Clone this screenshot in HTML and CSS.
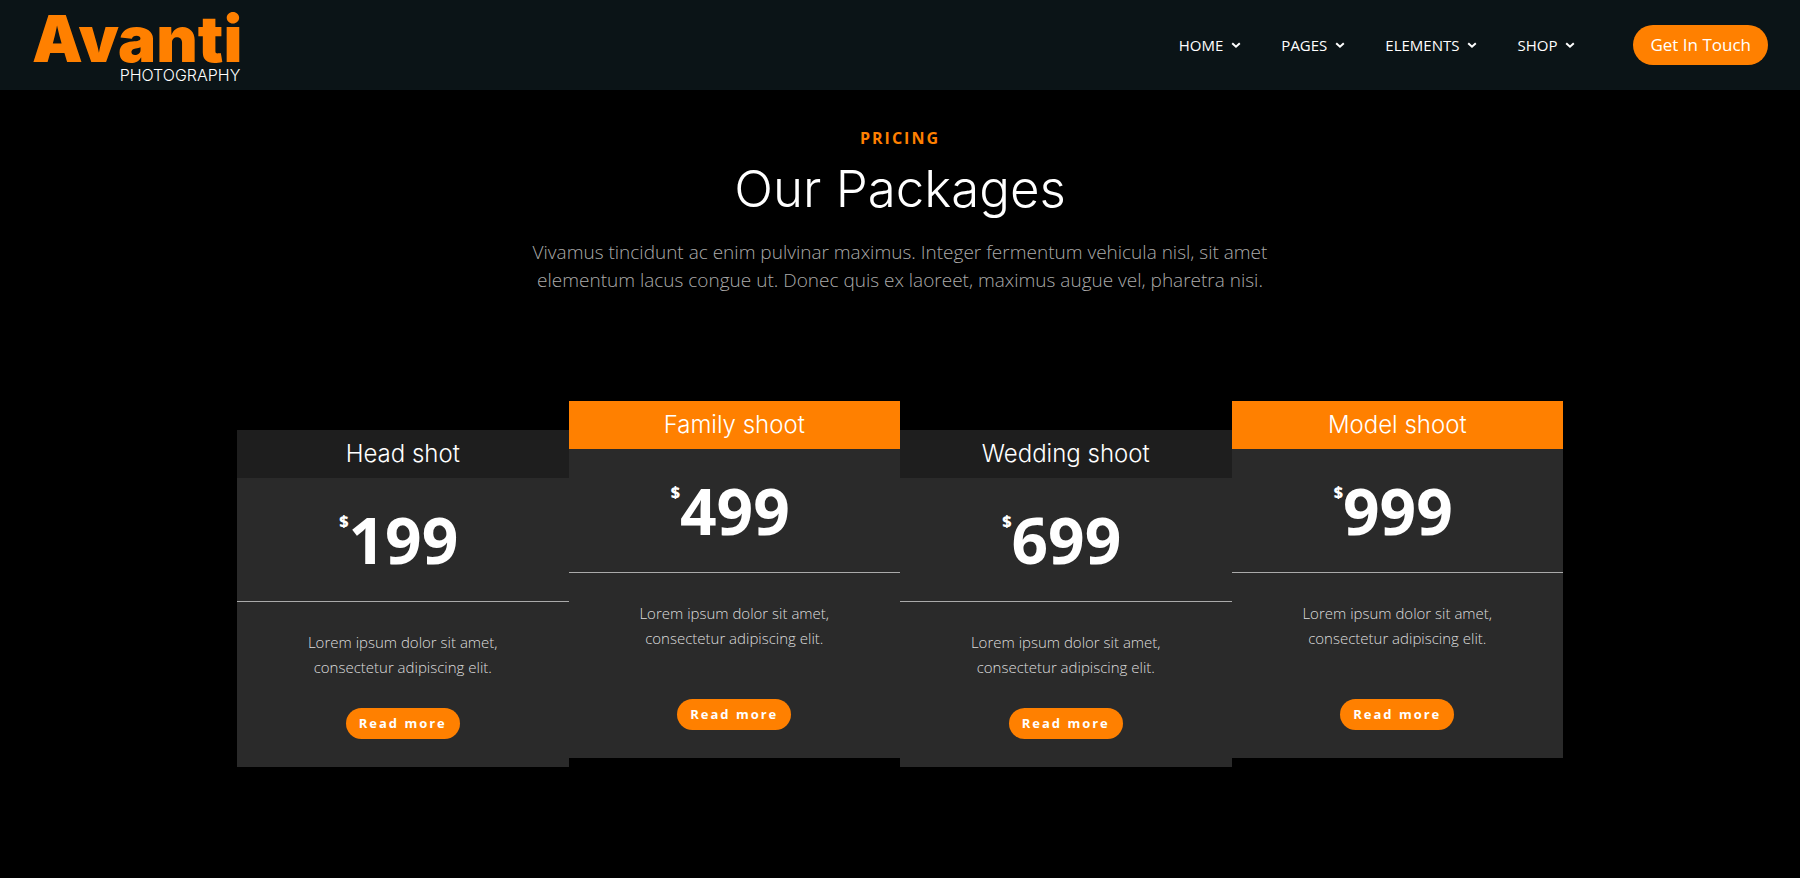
FILE: index.html
```html
<!DOCTYPE html>
<html lang="en">
<head>
<meta charset="utf-8">
<meta name="viewport" content="width=device-width, initial-scale=1">
<title>Avanti Photography</title>
<link rel="stylesheet" href="styles.css">
</head>
<body>
<header class="site-header">
  <a class="logo" href="#"><span class="logo-name">Avanti</span><span class="logo-sub">PHOTOGRAPHY</span></a>
  <nav class="main-nav" aria-label="Main">
    <a class="nav-link" href="#">HOME<svg class="chevron" viewBox="0 0 10 8" aria-hidden="true"><path d="M1.2 2.2 5 5.7 8.8 2.2"/></svg></a>
    <a class="nav-link" href="#">PAGES<svg class="chevron" viewBox="0 0 10 8" aria-hidden="true"><path d="M1.2 2.2 5 5.7 8.8 2.2"/></svg></a>
    <a class="nav-link" href="#">ELEMENTS<svg class="chevron" viewBox="0 0 10 8" aria-hidden="true"><path d="M1.2 2.2 5 5.7 8.8 2.2"/></svg></a>
    <a class="nav-link" href="#">SHOP<svg class="chevron" viewBox="0 0 10 8" aria-hidden="true"><path d="M1.2 2.2 5 5.7 8.8 2.2"/></svg></a>
    <a class="cta" href="#">Get In Touch</a>
  </nav>
</header>
<main>
  <section class="intro">
    <p class="eyebrow">PRICING</p>
    <h1 class="title">Our Packages</h1>
    <p class="lead">Vivamus tincidunt ac enim pulvinar maximus. Integer fermentum vehicula nisl, sit amet elementum lacus congue ut. Donec quis ex laoreet, maximus augue vel, pharetra nisi.</p>
  </section>
  <section class="plans">
    <article class="plan">
      <h2 class="plan-name">Head shot</h2>
      <p class="price"><span class="currency">$</span>199</p>
      <div class="plan-body"><p class="plan-text">Lorem ipsum dolor sit amet, consectetur adipiscing elit.</p><a class="more" href="#">Read more</a></div>
    </article>
    <article class="plan featured">
      <h2 class="plan-name">Family shoot</h2>
      <p class="price"><span class="currency">$</span>499</p>
      <div class="plan-body"><p class="plan-text">Lorem ipsum dolor sit amet, consectetur adipiscing elit.</p><a class="more" href="#">Read more</a></div>
    </article>
    <article class="plan">
      <h2 class="plan-name">Wedding shoot</h2>
      <p class="price"><span class="currency">$</span>699</p>
      <div class="plan-body"><p class="plan-text">Lorem ipsum dolor sit amet, consectetur adipiscing elit.</p><a class="more" href="#">Read more</a></div>
    </article>
    <article class="plan featured">
      <h2 class="plan-name">Model shoot</h2>
      <p class="price"><span class="currency">$</span>999</p>
      <div class="plan-body"><p class="plan-text">Lorem ipsum dolor sit amet, consectetur adipiscing elit.</p><a class="more" href="#">Read more</a></div>
    </article>
  </section>
</main>
</body>
</html>
```

FILE: styles.css
```css
* { box-sizing: border-box; }

body {
  margin: 0;
  background: #000;
  color: #fff;
  font-family: "Open Sans", "Noto Sans", sans-serif;
}

h1, h2, p { margin: 0; }
a { color: inherit; text-decoration: none; }

.site-header {
  display: flex;
  align-items: center;
  justify-content: space-between;
  padding: 0 32px;
  min-height: 90px;
  background: #0b1417;
}

.logo {
  display: flex;
  flex-direction: column;
  align-items: flex-end;
  padding-top: 6px;
  font-family: Inter, sans-serif;
}

.logo-name {
  color: #ff8000;
  font-size: 64px;
  font-weight: 900;
  line-height: 54px;
}

.logo-sub {
  padding-right: 2px;
  font-size: 16px;
  font-weight: 300;
  line-height: 18px;
}

.main-nav {
  display: flex;
  align-items: center;
  gap: 40px;
}

.nav-link {
  display: flex;
  align-items: center;
  gap: 8px;
  font-size: 15px;
  font-weight: 500;
}

.chevron {
  width: 10px;
  height: 8px;
  fill: none;
  stroke: #fff;
  stroke-width: 2;
}

.cta {
  margin-left: 18px;
  padding: 0 17px;
  border-radius: 20px;
  background: #ff8000;
  font-size: 17px;
  line-height: 40px;
}

.intro {
  max-width: 750px;
  margin: 0 auto;
  padding-top: 36px;
  text-align: center;
}

.eyebrow {
  color: #ff8000;
  font-size: 16px;
  font-weight: 700;
  letter-spacing: 2px;
  line-height: 24px;
}

.title {
  margin-top: 8px;
  font-family: Inter, sans-serif;
  font-size: 51px;
  font-weight: 300;
  line-height: 62px;
}

.lead {
  margin-top: 18px;
  color: #aaa;
  font-size: 19px;
  font-weight: 300;
  line-height: 28px;
}

.plans {
  display: grid;
  grid-template-columns: repeat(4, 1fr);
  align-items: start;
  max-width: 1326px;
  margin: 0 auto;
  padding: 107px 0 110px;
}

.plan {
  margin-top: 29px;
  background: #2a2a2a;
  text-align: center;
}

.plan-name {
  background: #1e1e1e;
  font-family: Inter, sans-serif;
  font-size: 24px;
  font-weight: 300;
  line-height: 48px;
}

.price {
  display: flex;
  align-items: flex-start;
  justify-content: center;
  height: 124px;
  padding: 30px 8px 0 0;
  border-bottom: 1px solid #aaa;
  font-size: 64px;
  font-weight: 700;
  line-height: 64px;
}

.currency {
  font-size: 16px;
  font-weight: 800;
  line-height: 26px;
}

.plan-body {
  display: flex;
  flex-direction: column;
  align-items: center;
  gap: 28px;
  padding: 28px 60px;
}

.plan-text {
  max-width: 220px;
  color: #ddd;
  font-size: 15px;
  font-weight: 300;
  line-height: 25px;
}

.more {
  padding: 0 13px;
  border-radius: 16px;
  background: #ff8000;
  font-size: 13px;
  font-weight: 700;
  letter-spacing: 2px;
  line-height: 31px;
}

.featured { margin-top: 0; }
.featured .plan-name { background: #ff8000; }
.featured .plan-body { gap: 48px; }
```
